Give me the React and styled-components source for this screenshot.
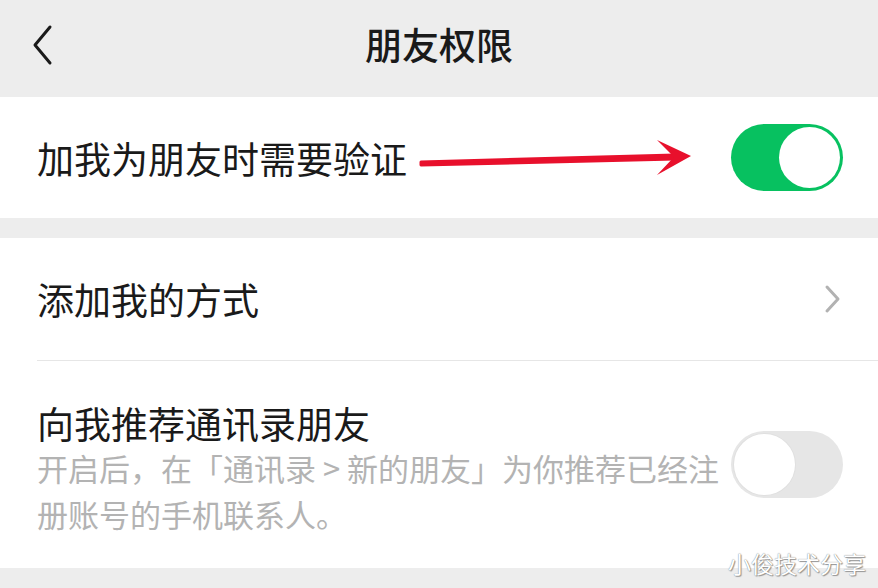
import React from 'react';
import styled, { createGlobalStyle } from 'styled-components';

const GlobalStyle = createGlobalStyle`
  html, body {
    margin: 0;
    padding: 0;
    background: #ededed;
  }
  body {
    font-family: "Noto Sans CJK SC", "Noto Sans", sans-serif;
    color: #1a1a1a;
  }
`;

const Page = styled.div`
  position: relative;
  width: 878px;
  height: 588px;
  overflow: hidden;
  background: #ededed;
`;

const NavBar = styled.div`
  height: 97px;
  display: flex;
  align-items: center;
  justify-content: center;
  position: relative;
`;

const BackButton = styled.div`
  position: absolute;
  left: 30px;
  top: 24px;
  width: 28px;
  height: 42px;
  display: flex;
  align-items: center;
`;

const Title = styled.h1`
  margin: 0;
  font-size: 37px;
  font-weight: 500;
  line-height: 1;
  margin-top: -9px;
  color: #1a1a1a;
`;

const Section = styled.div`
  background: #fff;
  margin-bottom: ${({ $gap }) => $gap || 0}px;
`;

const Row = styled.div`
  display: flex;
  align-items: center;
  height: ${({ $height }) => $height}px;
  padding: 0 35px 0 37px;
`;

const Label = styled.div`
  font-size: 37px;
  line-height: 44px;
  white-space: nowrap;
`;

const Spacer = styled.div`
  flex: 1;
`;

const Divider = styled.div`
  height: 1px;
  margin-left: 37px;
  background: #e6e6e6;
`;

const TallRow = styled.div`
  display: flex;
  align-items: flex-start;
  padding: 40px 35px 31px 37px;
  gap: 8px;
`;

const TextBlock = styled.div`
  flex: 1;
  min-width: 0;
`;

const Hint = styled.div`
  font-size: 31px;
  line-height: 46px;
  color: #b3b3b3;
`;

const ToggleSlot = styled.div`
  margin-top: 30px;
`;

const Track = styled.div`
  flex-shrink: 0;
  width: 112px;
  height: 67px;
  border-radius: 34px;
  box-sizing: border-box;
  background: ${({ $on }) => ($on ? '#07c160' : '#e6e6e6')};
  display: flex;
  align-items: center;
  justify-content: ${({ $on }) => ($on ? 'flex-end' : 'flex-start')};
  padding: 0 3px;
`;

const Knob = styled.div`
  width: 61px;
  height: 61px;
  border-radius: 50%;
  background: #fff;
  box-shadow: ${({ $on }) => ($on ? 'none' : '0 0 0 1px #e0e0e0')};
`;

const Arrow = styled.svg`
  margin-left: 12px;
  flex-shrink: 0;
`;

const Watermark = styled.div`
  position: absolute;
  right: 12px;
  bottom: 8px;
  font-size: 23px;
  color: #fff;
  text-shadow: 0 0 1px #666, 1px 1px 1px #999;
`;

const Toggle = ({ on }) => (
  <Track $on={on}>
    <Knob $on={on} />
  </Track>
);

const App = () => (
  <Page>
    <GlobalStyle />
    <NavBar>
      <BackButton>
        <svg width="28" height="42" viewBox="0 0 28 42">
          <polyline points="20,3 5,21 20,39" fill="none" stroke="#1a1a1a" strokeWidth="3" strokeLinecap="round" strokeLinejoin="round" />
        </svg>
      </BackButton>
      <Title>朋友权限</Title>
    </NavBar>

    <Section $gap={20}>
      <Row $height={121}>
        <Label>加我为朋友时需要验证</Label>
        <Arrow width="276" height="40" viewBox="0 0 276 40">
          <path d="M2,24 L256,17 L256,21 L2,27 Z" fill="#e8102c" stroke="#e8102c" strokeWidth="3" strokeLinejoin="round" strokeLinecap="round" />
          <path d="M238,2 L272,18 L238,37 L255,19 Z" fill="#e8102c" />
        </Arrow>
        <Spacer />
        <Toggle on />
      </Row>
    </Section>

    <Section>
      <Row $height={122}>
        <Label>添加我的方式</Label>
        <Spacer />
        <svg width="20" height="30" viewBox="0 0 20 30">
          <polyline points="4,3 15,15 4,27" fill="none" stroke="#b2b2b2" strokeWidth="3" strokeLinecap="round" strokeLinejoin="round" />
        </svg>
      </Row>
      <Divider />
      <TallRow>
        <TextBlock>
          <Label>向我推荐通讯录朋友</Label>
          <Hint>开启后，在「通讯录 &gt; 新的朋友」为你推荐已经注册账号的手机联系人。</Hint>
        </TextBlock>
        <ToggleSlot>
          <Toggle on={false} />
        </ToggleSlot>
      </TallRow>
    </Section>

    <Watermark>小俊技术分享</Watermark>
  </Page>
);

export default App;
